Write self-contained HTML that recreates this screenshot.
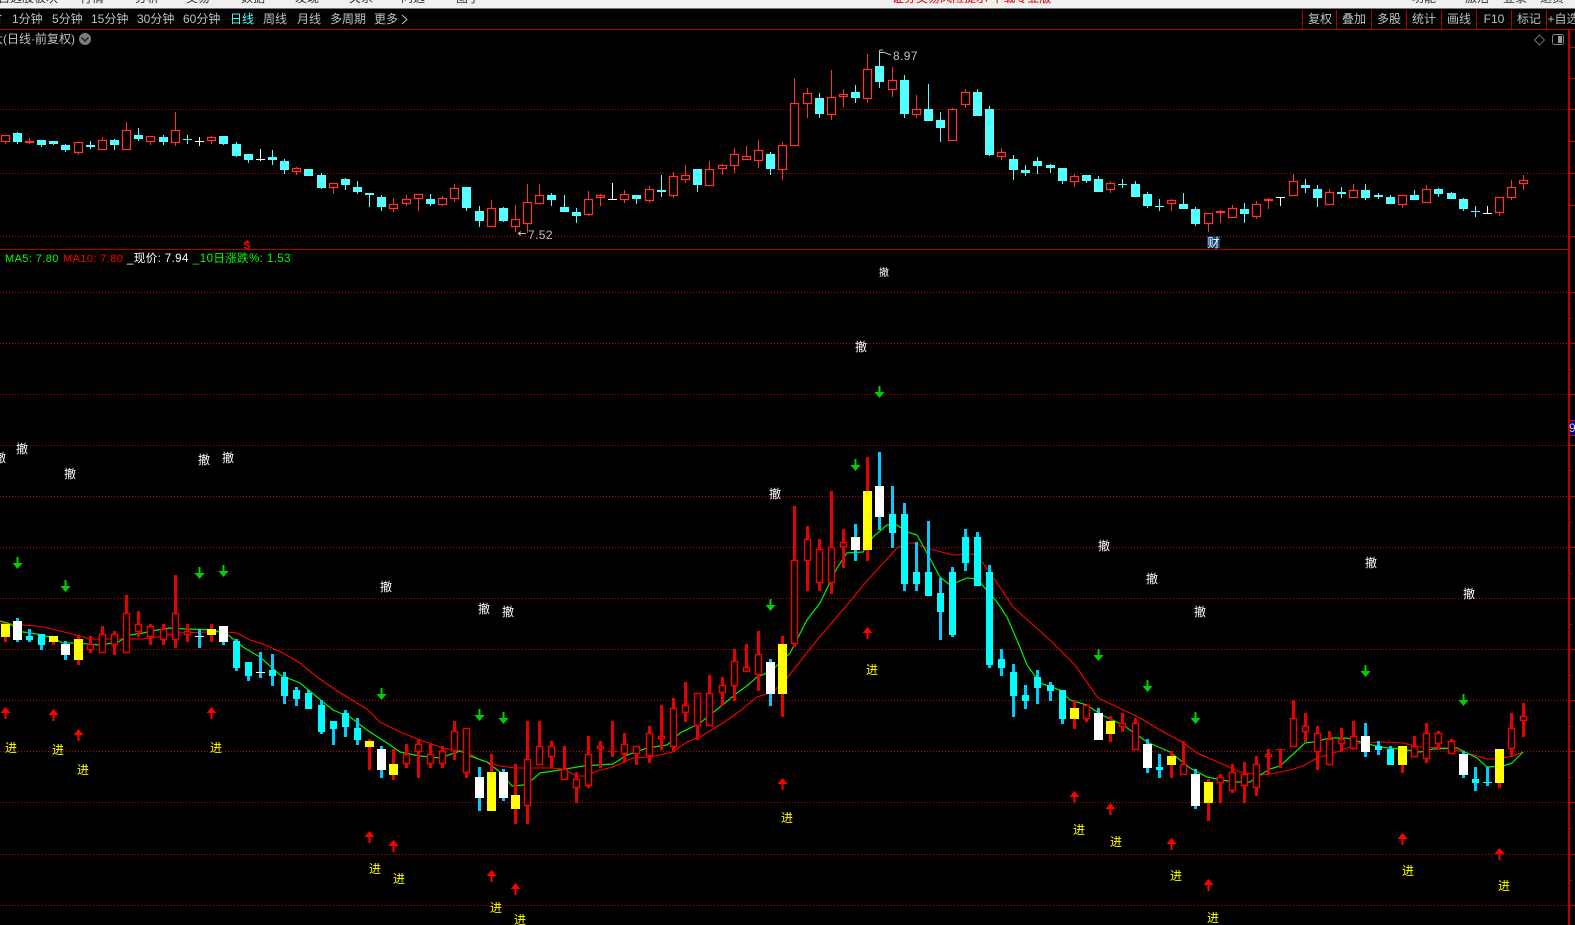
<!DOCTYPE html>
<html><head><meta charset="utf-8"><title>K线</title>
<style>
html,body{margin:0;padding:0;background:#000;width:1575px;height:925px;overflow:hidden}
svg{display:block;position:absolute;left:0;top:0}
text{font-family:"WenQuanYi Zen Hei","Liberation Sans","Noto Sans CJK SC",sans-serif;font-size:12px}
.n{font-family:"Liberation Sans","WenQuanYi Zen Hei",sans-serif;letter-spacing:.4px}
.g{fill:#c0c0c0}
.j{fill:#ffff00;text-anchor:middle}
.c{fill:#fff;text-anchor:middle}
.m{text-anchor:middle;fill:#c0c0c0}
</style></head><body>
<svg width="1575" height="925" viewBox="0 0 1575 925" xmlns="http://www.w3.org/2000/svg">
<rect width="1575" height="925" fill="#000"/>
<!-- menu bar -->
<rect width="1575" height="8" fill="#f0f0f0"/><rect y="8" width="1575" height="1" fill="#777"/>
<g fill="#333">
<text x="-2" y="2">自选股板块</text><text x="80" y="2">行情</text><text x="135" y="2">分析</text><text x="186" y="2">交易</text><text x="241" y="2">数据</text><text x="295" y="2">发现</text><text x="349" y="2">关系</text><text x="401" y="2">问选</text><text x="456" y="2">图子</text>
<text x="1412" y="2">功能</text><text x="1465" y="2">激活</text><text x="1503" y="2">登录</text><text x="1540" y="2">退货</text>
</g>
<text x="892" y="2" fill="#e00000">证券交易风险提示 下载专业版</text>
<!-- toolbar -->
<g class="g">
<text x="-10" y="23">时</text><text x="12" y="23">1分钟</text><text x="52" y="23">5分钟</text><text x="91" y="23">15分钟</text><text x="137" y="23">30分钟</text><text x="183" y="23">60分钟</text>
<text x="230" y="23" fill="#55ffff" style="fill:#55ffff">日线</text><text x="263" y="23">周线</text><text x="297" y="23">月线</text><text x="330" y="23">多周期</text><text x="374" y="23">更多</text>
</g>
<path d="M402 15l5 4.500-5 4.500" fill="none" stroke="#c0c0c0"/>
<g class="m">
<text x="1320" y="23">复权</text><text x="1354" y="23">叠加</text><text x="1389" y="23">多股</text><text x="1424" y="23">统计</text><text x="1459" y="23">画线</text><text x="1494" y="23">F10</text><text x="1529" y="23">标记</text><text x="1563" y="23">+自选</text>
</g>
<path d="M1302.500 10V29M1336.500 10V29M1371.500 10V29M1406.500 10V29M1441.500 10V29M1476.500 10V29M1511.500 10V29M1546.500 10V29" stroke="#b00000" shape-rendering="crispEdges"/>
<!-- frames -->
<g shape-rendering="crispEdges">
<path d="M0 29.500H1575M0 249.500H1568" stroke="#b00000"/>
<rect x="1568" y="29" width="2" height="896" fill="#c00000"/>
<path d="M1570 47.500h5M1570 78.500h5M1570 109.500h5M1570 141.500h5M1570 173.500h5M1570 205.500h5M1570 236.500h5M1570 292.500h5M1570 318.500h2M1570 343.500h5M1570 369.500h2M1570 394.500h5M1570 470.500h2M1570 445.500h5M1570 496.500h5M1570 522.500h2M1570 547.500h5M1570 573.500h2M1570 598.500h5M1570 624.500h2M1570 649.500h5M1570 675.500h2M1570 700.500h5M1570 726.500h2M1570 751.500h5M1570 777.500h2M1570 802.500h5M1570 828.500h2M1570 854.500h5M1570 880.500h2M1570 905.500h5" stroke="#c00000"/>
<path d="M0 109.500H1568M0 173.500H1568M0 236.500H1568M0 292.500H1568M0 343.500H1568M0 394.500H1568M0 445.500H1568M0 496.500H1568M0 547.500H1568M0 598.500H1568M0 649.500H1568M0 700.500H1568M0 751.500H1568M0 802.500H1568M0 854.500H1568M0 905.500H1568" stroke="#d00000" stroke-dasharray="1 2"/>
</g>
<!-- axis label -->
<rect x="1570" y="420" width="5" height="16" fill="#000090"/><path d="M1570 420.500h5M1570 435.500h5" stroke="#d00000"/>
<text x="1569" y="432" fill="#d0d0d0" style="font-family:'Liberation Sans',sans-serif">9</text>
<!-- title -->
<text x="-9" y="43" class="g">大(日线·前复权)</text>
<circle cx="85" cy="39" r="6" fill="#7c7c7c"/><path d="M81.500 37.500l3.500 3.500 3.500-3.500" fill="none" stroke="#1c1c1c" stroke-width="1.500"/>
<path d="M1539.500 35l5 5-5 5-5-5z" fill="none" stroke="#707070"/>
<rect x="1552.500" y="34.500" width="11" height="10" rx="2" fill="#000" stroke="#808080"/><rect x="1558" y="36" width="4" height="7" fill="#999"/>

<!-- top panel candles -->
<g shape-rendering="crispEdges">
<path stroke="#ff3232" fill="none" d="M5.500 135V144M29.500 138V144M78.500 142V155M102.500 137V150M126.500 122V150M150.500 136V145M175.500 112V146M211.500 136V144M296.500 167V175M333.500 183V194M393.500 198V212M406.500 195V206M418.500 194V211M442.500 196V206M454.500 184V202M491.500 200V227M515.500 205V232M527.500 184V233M539.500 184V204M588.500 191V216M600.500 194V206M624.500 190V203M649.500 186V203M673.500 172V198M685.500 165V183M709.500 161V186M722.500 164V175M734.500 148V173M746.500 146V160M758.500 140V168M782.500 142V180M794.500 78V146M807.500 88V118M831.500 70V120M843.500 89V107M867.500 54V103M892.500 67V97M916.500 95V118M952.500 108V141M965.500 89V108M1001.500 148V160M1074.500 174V187M1110.500 181V193M1171.500 199V211M1208.500 213V232M1220.500 210V223M1232.500 205V218M1256.500 201V219M1268.500 198V209M1293.500 174V196M1329.500 189V205M1353.500 184V198M1402.500 195V208M1426.500 185V203M1499.500 197V216M1511.500 180V200M1523.500 175V190"/>
<path stroke="#ff3232" stroke-width="1.200" shape-rendering="auto" fill="#000" d="M1.500 135.500h8V141.500h-8zM25.500 141.500h8V142.500h-8zM74.500 142.500h8V152.500h-8zM98.500 140.500h8V149.500h-8zM122.500 130.500h8V149.500h-8zM146.500 136.500h8V141.500h-8zM171.500 130.500h8V142.500h-8zM207.500 137.500h8V140.500h-8zM292.500 168.500h8V171.500h-8zM329.500 183.500h8V187.500h-8zM389.500 204.500h8V208.500h-8zM402.500 199.500h8V203.500h-8zM414.500 194.500h8V198.500h-8zM438.500 198.500h8V204.500h-8zM450.500 188.500h8V198.500h-8zM487.500 208.500h8V226.500h-8zM511.500 219.500h8V226.500h-8zM523.500 202.500h8V223.500h-8zM535.500 195.500h8V203.500h-8zM584.500 199.500h8V214.500h-8zM596.500 195.500h8V197.500h-8zM620.500 194.500h8V199.500h-8zM645.500 189.500h8V200.500h-8zM669.500 176.500h8V195.500h-8zM681.500 175.500h8V179.500h-8zM705.500 169.500h8V185.500h-8zM718.500 165.500h8V168.500h-8zM730.500 154.500h8V165.500h-8zM742.500 156.500h8V159.500h-8zM754.500 150.500h8V160.500h-8zM778.500 145.500h8V169.500h-8zM790.500 103.500h8V145.500h-8zM803.500 93.500h8V103.500h-8zM827.500 97.500h8V114.500h-8zM839.500 94.500h8V96.500h-8zM863.500 69.500h8V98.500h-8zM888.500 80.500h8V89.500h-8zM912.500 109.500h8V114.500h-8zM948.500 109.500h8V140.500h-8zM961.500 92.500h8V104.500h-8zM997.500 152.500h8V156.500h-8zM1070.500 176.500h8V181.500h-8zM1106.500 183.500h8V189.500h-8zM1167.500 200.500h8V203.500h-8zM1204.500 213.500h8V223.500h-8zM1216.500 211.500h8V212.500h-8zM1228.500 208.500h8V217.500h-8zM1252.500 204.500h8V216.500h-8zM1264.500 199.500h8V200.500h-8zM1289.500 181.500h8V195.500h-8zM1325.500 192.500h8V204.500h-8zM1349.500 190.500h8V197.500h-8zM1398.500 195.500h8V204.500h-8zM1422.500 189.500h8V202.500h-8zM1495.500 197.500h8V212.500h-8zM1507.500 187.500h8V197.500h-8zM1519.500 180.500h8V183.500h-8z"/>
<path stroke="#54ffff" fill="none" d="M17.500 132V144M41.500 140V147M53.500 141V145M65.500 144V152M90.500 141V149M114.500 139V150M138.500 128V141M163.500 135V145M187.500 135V144M223.500 136V145M236.500 142V157M248.500 154V163M272.500 150V165M284.500 159V174M321.500 173V189M345.500 178V190M357.500 181V194M369.500 193V207M381.500 195V211M430.500 194V206M466.500 187V211M479.500 206V227M503.500 207V222M551.500 193V206M564.500 195V212M576.500 208V223M636.500 195V204M661.500 175V197M697.500 169V192M770.500 152V175M819.500 93V118M855.500 85V103M879.500 50V88M904.500 75V118M928.500 84V121M940.500 112V142M977.500 89V116M989.500 106V156M1013.500 155V180M1025.500 165V176M1037.500 157V174M1050.500 164V173M1062.500 168V184M1086.500 175V183M1098.500 176V192M1122.500 179V188M1135.500 181V197M1147.500 192V208M1159.500 199V211M1183.500 193V209M1195.500 207V226M1244.500 203V223M1305.500 179V193M1317.500 185V207M1341.500 187V198M1365.500 184V200M1378.500 193V199M1390.500 195V204M1414.500 190V200M1438.500 188V197M1451.500 192V199M1463.500 198V211M1475.500 206V217"/>
<path fill="#54ffff" d="M13 133h9V142h-9zM37 140h9V145h-9zM49 141h9V144h-9zM61 145h9V150h-9zM86 145h9V147h-9zM110 140h9V145h-9zM134 135h9V139h-9zM159 137h9V142h-9zM183 139h9V140h-9zM219 136h9V144h-9zM232 144h9V156h-9zM244 154h9V160h-9zM268 157h9V160h-9zM280 161h9V170h-9zM304 169h9V176h-9zM317 175h9V188h-9zM341 179h9V185h-9zM353 187h9V192h-9zM365 193h9V195h-9zM377 197h9V207h-9zM426 199h9V204h-9zM462 187h9V208h-9zM475 211h9V221h-9zM499 208h9V221h-9zM547 195h9V200h-9zM560 207h9V212h-9zM572 212h9V216h-9zM632 195h9V199h-9zM657 190h9V192h-9zM693 169h9V185h-9zM766 154h9V169h-9zM815 98h9V114h-9zM851 92h9V98h-9zM875 66h9V82h-9zM900 80h9V114h-9zM924 109h9V121h-9zM936 120h9V128h-9zM973 92h9V116h-9zM985 109h9V155h-9zM1009 159h9V170h-9zM1021 170h9V173h-9zM1033 161h9V166h-9zM1046 165h9V168h-9zM1058 168h9V181h-9zM1082 175h9V181h-9zM1094 179h9V192h-9zM1118 184h9V185h-9zM1131 184h9V197h-9zM1143 194h9V206h-9zM1155 206h9V207h-9zM1179 204h9V209h-9zM1191 209h9V224h-9zM1240 209h9V214h-9zM1301 185h9V188h-9zM1313 189h9V198h-9zM1337 192h9V194h-9zM1361 190h9V198h-9zM1374 195h9V197h-9zM1386 197h9V204h-9zM1410 195h9V200h-9zM1434 189h9V194h-9zM1447 193h9V199h-9zM1459 199h9V209h-9zM1471 211h9V212h-9z"/>
<path stroke="#fff" fill="none" d="M199.500 137V146M195 141.500h9M260.500 149V161M256 159.500h9M612.500 183V200M608 199.500h9M1280.500 197V206M1276 197.500h9M1487.500 206V214M1483 213.500h9"/>
</g>
<!-- annotations top -->
<path d="M244 243l3-3 3 3z" fill="#ff0000"/><text x="247" y="249" fill="#ff0000" text-anchor="middle" style="font-family:'Liberation Sans',sans-serif;font-weight:700;font-size:11px">S</text>
<rect x="1207" y="236" width="13" height="12" fill="#0e3d70"/><text x="1213.500" y="247" fill="#fff" text-anchor="middle">财</text>
<path d="M518 233.500h8M518 233.500l3-2M518 233.500l3 2" stroke="#c0c0c0" fill="none"/>
<text x="528" y="239" class="n g">7.52</text>
<path d="M879.500 50v5M880 50h3M880 52.500h3M883 52l8 3" stroke="#c0c0c0" fill="none"/>
<text x="893" y="60" class="n g">8.97</text>
<!-- legend -->
<text x="5" y="262" class="n" fill="#00ff00" style="font-size:11px">MA5: 7.80</text>
<text x="63" y="262" class="n" fill="#ff0000" style="font-size:11px">MA10: 7.80</text>
<text x="127" y="262" class="n" fill="#fff" style="font-size:11.500px">_现价: 7.94</text>
<text x="193" y="262" class="n" fill="#00ff00" style="font-size:11.500px">_10日涨跌%: 1.53</text>

<!-- MA lines -->
<polyline fill="none" stroke="#ff0000" stroke-width="1.100" points="0,623 12,624 24,625 36,626 48,628 60,631 72,634 83,637 90,639 143,639 157,637 177,633 210,632 227,632 237,633 250,640 263,644 283,653 300,663 317,677 333,688 347,697 367,709 380,722 400,732 420,740 443,748 467,752 480,760 500,766 515,768 550,768 563,769 577,776 587,776 597,771 613,767 633,758 650,757 673,752 687,742 700,737 723,723 740,711 757,697 773,692 787,678 817,640 853,598 865,583 897,548 907,543 913,543 930,549 953,555 973,554 983,563 1000,587 1013,607 1050,640 1075,665 1098,698 1117,707 1140,718 1160,730 1182,742 1197,753 1220,763 1240,772 1260,775 1270,774 1290,770 1303,766 1317,758 1340,751 1360,743 1383,742 1403,743 1420,747 1447,748 1467,753 1487,759 1497,759 1513,756 1523,752"/>
<polyline fill="none" stroke="#00f000" stroke-width="1.200" points="0,621 8,623 23,632 37,634 50,637 63,643 77,643 100,645 118,642 130,635 143,633 157,630 170,628 187,629 213,630 227,634 243,647 260,657 280,675 300,683 317,697 333,710 350,717 367,730 387,743 400,752 420,756 440,758 460,751 470,756 487,762 500,772 512,786 523,785 532,780 540,773 560,770 583,766 613,764 627,755 647,748 667,745 680,733 700,723 720,707 737,693 748,685 757,677 770,672 790,653 807,620 820,603 837,568 847,553 863,552 873,537 887,525 897,525 907,532 917,535 927,553 940,577 950,585 967,578 977,579 997,602 1007,617 1017,640 1027,665 1040,683 1060,690 1070,700 1087,705 1100,714 1123,725 1147,742 1170,752 1190,768 1207,777 1233,782 1250,782 1260,775 1270,769 1280,766 1290,757 1305,743 1313,742 1330,738 1347,738 1360,742 1380,747 1400,749 1420,752 1433,749 1457,748 1477,758 1487,767 1503,766 1512,763 1523,752"/>

<!-- bottom panel candles -->
<g shape-rendering="crispEdges">
<path stroke="#e60000" stroke-width="3" fill="none" d="M5.500 624V642M53.500 636V645M78.500 635V665M90.500 636V653M102.500 626V653M114.500 631V655M126.500 595V653M138.500 611V637M150.500 624V645M163.500 624V645M175.500 575V648M187.500 624V642M211.500 624V642M369.500 739V770M393.500 749V780M406.500 744V768M418.500 739V778M430.500 744V768M442.500 746V768M454.500 721V760M466.500 728V778M491.500 754V811M515.500 764V824M527.500 721V824M539.500 721V765M551.500 741V768M564.500 746V780M576.500 772V803M588.500 736V788M600.500 741V768M612.500 721V757M624.500 733V763M636.500 746V765M649.500 726V763M661.500 705V750M673.500 698V752M685.500 682V722M697.500 693V740M709.500 675V726M722.500 677V706M734.500 649V701M746.500 644V672M758.500 631V691M782.500 636V717M794.500 506V647M807.500 526V591M819.500 539V591M831.500 491V594M843.500 529V568M867.500 457V561M1074.500 700V729M1086.500 705V722M1110.500 716V742M1122.500 713V732M1135.500 718V750M1171.500 751V778M1183.500 741V775M1208.500 779V821M1220.500 774V803M1232.500 764V793M1244.500 762V803M1256.500 756V796M1268.500 749V775M1280.500 749V768M1293.500 700V747M1305.500 713V742M1317.500 726V770M1329.500 731V765M1341.500 728V752M1353.500 721V749M1402.500 746V773M1414.500 736V757M1426.500 723V763M1438.500 731V750M1451.500 739V754M1499.500 749V788M1511.500 713V757M1523.500 703V737"/>
<path stroke="#f00000" stroke-width="1.400" shape-rendering="auto" fill="#000" d="M87.500 644.500h6V649.500h-6zM99.500 634.500h6V652.500h-6zM111.500 634.500h6V644.500h-6zM123.500 613.500h6V652.500h-6zM135.500 624.500h6V631.500h-6zM147.500 626.500h6V636.500h-6zM160.500 629.500h6V639.500h-6zM172.500 613.500h6V639.500h-6zM184.500 631.500h6V634.500h-6zM403.500 754.500h6V763.500h-6zM415.500 744.500h6V751.500h-6zM427.500 754.500h6V763.500h-6zM439.500 751.500h6V763.500h-6zM451.500 731.500h6V750.500h-6zM463.500 728.500h6V772.500h-6zM524.500 759.500h6V805.500h-6zM536.500 746.500h6V764.500h-6zM548.500 746.500h6V756.500h-6zM561.500 769.500h6V779.500h-6zM573.500 779.500h6V787.500h-6zM585.500 754.500h6V785.500h-6zM597.500 746.500h6V748.500h-6zM621.500 744.500h6V753.500h-6zM633.500 746.500h6V753.500h-6zM646.500 733.500h6V755.500h-6zM658.500 736.500h6V738.500h-6zM670.500 708.500h6V746.500h-6zM682.500 705.500h6V712.500h-6zM694.500 693.500h6V725.500h-6zM706.500 693.500h6V725.500h-6zM719.500 685.500h6V692.500h-6zM731.500 661.500h6V685.500h-6zM743.500 667.500h6V671.500h-6zM755.500 654.500h6V674.500h-6zM791.500 560.500h6V643.500h-6zM804.500 539.500h6V560.500h-6zM816.500 549.500h6V582.500h-6zM828.500 547.500h6V582.500h-6zM840.500 542.500h6V546.500h-6zM1083.500 705.500h6V718.500h-6zM1119.500 723.500h6V726.500h-6zM1132.500 723.500h6V749.500h-6zM1180.500 764.500h6V774.500h-6zM1217.500 777.500h6V782.500h-6zM1229.500 772.500h6V790.500h-6zM1241.500 774.500h6V785.500h-6zM1253.500 764.500h6V787.500h-6zM1265.500 754.500h6V756.500h-6zM1290.500 718.500h6V746.500h-6zM1302.500 726.500h6V731.500h-6zM1314.500 733.500h6V751.500h-6zM1326.500 739.500h6V764.500h-6zM1338.500 739.500h6V743.500h-6zM1350.500 736.500h6V748.500h-6zM1411.500 746.500h6V756.500h-6zM1423.500 733.500h6V758.500h-6zM1435.500 733.500h6V743.500h-6zM1448.500 741.500h6V753.500h-6zM1508.500 728.500h6V748.500h-6zM1520.500 716.500h6V720.500h-6z"/>
<path fill="#e60000" d="M608 751h9v1h-9zM1276 749h9v1h-9z"/>
<path stroke="#00ccff" stroke-width="3" fill="none" d="M17.500 618V642M29.500 629V642M41.500 634V650M65.500 641V660M199.500 629V648M223.500 626V645M236.500 639V671M248.500 662V681M260.500 652V678M272.500 654V686M284.500 672V704M296.500 687V706M308.500 690V709M321.500 700V734M333.500 721V745M345.500 710V737M357.500 718V745M381.500 746V778M479.500 767V811M503.500 769V801M770.500 659V706M855.500 524V561M879.500 452V530M892.500 486V548M904.500 503V591M916.500 542V591M928.500 521V596M940.500 578V640M952.500 567V637M965.500 529V571M977.500 532V586M989.500 565V668M1001.500 649V676M1013.500 664V717M1025.500 685V709M1037.500 670V704M1050.500 682V701M1062.500 690V724M1098.500 708V740M1147.500 739V773M1159.500 754V778M1195.500 769V809M1365.500 723V757M1378.500 741V755M1390.500 746V765M1463.500 751V778M1475.500 767V791M1487.500 767V786"/>
<path fill="#00ffff" d="M26 636h7V640h-7zM38 634h7V645h-7zM233 641h7V668h-7zM245 662h7V676h-7zM269 670h7V676h-7zM281 677h7V696h-7zM293 690h7V699h-7zM305 693h7V709h-7zM318 705h7V732h-7zM330 721h7V729h-7zM342 713h7V727h-7zM354 728h7V740h-7zM889 514h7V533h-7zM901 514h7V584h-7zM913 572h7V584h-7zM925 572h7V596h-7zM937 593h7V612h-7zM949 572h7V635h-7zM962 537h7V563h-7zM974 537h7V586h-7zM986 572h7V665h-7zM998 659h7V668h-7zM1010 672h7V696h-7zM1022 695h7V701h-7zM1034 677h7V688h-7zM1047 685h7V691h-7zM1059 690h7V719h-7zM1156 767h7V770h-7zM1375 746h7V750h-7zM1387 749h7V765h-7zM1472 779h7V783h-7zM1483 782h9V783h-9z"/>
<path fill="#fff" d="M13 621h9V640h-9zM61 644h9V655h-9zM195 636h9V637h-9zM219 626h9V642h-9zM256 672h9V673h-9zM377 749h9V770h-9zM475 777h9V798h-9zM499 772h9V798h-9zM766 662h9V694h-9zM851 537h9V550h-9zM875 486h9V517h-9zM1094 713h9V740h-9zM1143 744h9V768h-9zM1191 774h9V806h-9zM1361 736h9V752h-9zM1459 754h9V775h-9z"/>
<path fill="#ffff00" d="M1 624h9V637h-9zM49 636h9V642h-9zM74 639h9V660h-9zM207 629h9V635h-9zM365 741h9V747h-9zM389 764h9V775h-9zM487 772h9V811h-9zM511 795h9V809h-9zM778 644h9V694h-9zM863 491h9V550h-9zM1070 708h9V719h-9zM1106 721h9V734h-9zM1167 756h9V765h-9zM1204 782h9V803h-9zM1398 746h9V765h-9zM1495 749h9V783h-9z"/>
</g>
<!-- arrows -->
<path fill="#ff0000" d="M5.500 707l5 6h-4v6h-2v-6h-4zM53.500 709l5 6h-4v6h-2v-6h-4zM78.500 729l5 6h-4v6h-2v-6h-4zM211.500 707l5 6h-4v6h-2v-6h-4zM369.500 831l5 6h-4v6h-2v-6h-4zM393.500 840l5 6h-4v6h-2v-6h-4zM491.500 870l5 6h-4v6h-2v-6h-4zM515.500 883l5 6h-4v6h-2v-6h-4zM782.500 778l5 6h-4v6h-2v-6h-4zM867.500 627l5 6h-4v6h-2v-6h-4zM1074.500 791l5 6h-4v6h-2v-6h-4zM1110.500 803l5 6h-4v6h-2v-6h-4zM1171.500 838l5 6h-4v6h-2v-6h-4zM1208.500 879l5 6h-4v6h-2v-6h-4zM1402.500 833l5 6h-4v6h-2v-6h-4zM1499.500 848l5 6h-4v6h-2v-6h-4z"/>
<path fill="#00d000" d="M16.500 557h2v6h4l-5 6-5-6h4zM64.500 580h2v6h4l-5 6-5-6h4zM198.500 567h2v6h4l-5 6-5-6h4zM222.500 565h2v6h4l-5 6-5-6h4zM380.500 688h2v6h4l-5 6-5-6h4zM478.500 709h2v6h4l-5 6-5-6h4zM502.500 712h2v6h4l-5 6-5-6h4zM769.500 599h2v6h4l-5 6-5-6h4zM854.500 459h2v6h4l-5 6-5-6h4zM878.500 386h2v6h4l-5 6-5-6h4zM1097.500 649h2v6h4l-5 6-5-6h4zM1146.500 680h2v6h4l-5 6-5-6h4zM1194.500 712h2v6h4l-5 6-5-6h4zM1364.500 665h2v6h4l-5 6-5-6h4zM1462.500 694h2v6h4l-5 6-5-6h4z"/>
<!-- labels -->
<g class="j">
<text x="11" y="752">进</text><text x="58" y="754">进</text><text x="83" y="774">进</text><text x="216" y="752">进</text><text x="375" y="873">进</text><text x="399" y="883">进</text><text x="496" y="912">进</text><text x="520" y="924">进</text><text x="787" y="822">进</text><text x="872" y="674">进</text><text x="1079" y="834">进</text><text x="1116" y="846">进</text><text x="1176" y="880">进</text><text x="1213" y="922">进</text><text x="1408" y="875">进</text><text x="1504" y="890">进</text>
</g>
<g class="c">
<text x="0" y="462">撤</text><text x="22" y="453">撤</text><text x="70" y="478">撤</text><text x="204" y="464">撤</text><text x="228" y="462">撤</text><text x="386" y="591">撤</text><text x="484" y="613">撤</text><text x="508" y="616">撤</text><text x="775" y="498">撤</text><text x="861" y="351">撤</text><text x="884" y="276" style="font-size:10px">撤</text><text x="1104" y="550">撤</text><text x="1152" y="583">撤</text><text x="1200" y="616">撤</text><text x="1371" y="567">撤</text><text x="1469" y="598">撤</text>
</g>
</svg>
</body></html>
